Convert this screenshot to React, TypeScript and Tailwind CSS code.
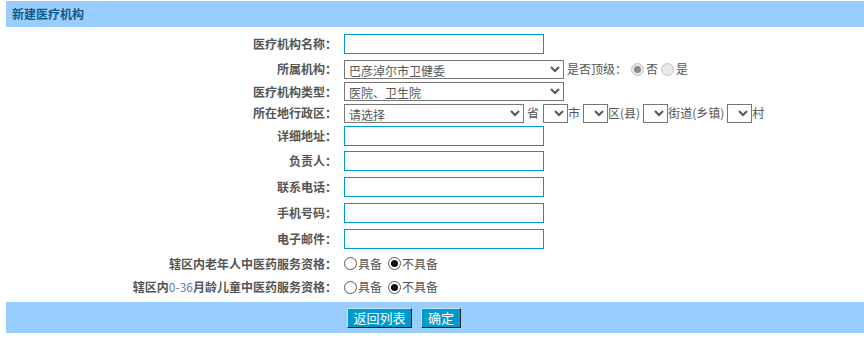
import React from 'react';

const font = { fontFamily: '"Noto Sans CJK SC", "Liberation Sans", sans-serif' };

const Radio: React.FC<{ checked?: boolean; disabled?: boolean }> = ({ checked, disabled }) => (
  <span
    className={
      disabled
        ? 'inline-flex items-center justify-center w-[13px] h-[13px] rounded-full border border-[#c4c4c4] bg-[#e8e8e8]'
        : 'inline-flex items-center justify-center w-[13px] h-[13px] rounded-full border border-[#555] bg-white'
    }
  >
    {checked && (
      <span className={disabled ? 'w-[7px] h-[7px] rounded-full bg-[#8a8a8a]' : 'w-[7px] h-[7px] rounded-full bg-[#111]'} />
    )}
  </span>
);

const TextInput: React.FC = () => (
  <input type="text" className="w-[200px] h-[20px] border border-[#0099cc] bg-white px-1 text-[12px] outline-none" />
);

const Row: React.FC<{ label: React.ReactNode; h: string; children: React.ReactNode }> = ({ label, h, children }) => (
  <div className={`flex items-center ${h}`}>
    <div className="w-[337px] text-right font-bold text-[12px] text-[#555] leading-none">{label}</div>
    <div className="ml-[7px] flex items-center text-[12px] text-[#555]">{children}</div>
  </div>
);

const App: React.FC = () => {
  return (
    <div className="w-[864px] h-[345px] bg-white" style={font}>
      <div className="ml-[6px] mt-[1px] h-[26px] bg-[#99ccff] flex items-center pl-[6px]">
        <span className="text-[12px] font-bold text-[#0b5c8c]">新建医疗机构</span>
      </div>

      <div className="mt-[4px]">
        <Row label="医疗机构名称：" h="h-[26px]">
          <TextInput />
        </Row>
        <Row label="所属机构：" h="h-[24px]">
          <select className="w-[220px] h-[19px] border border-[#767676] text-[12px] text-[#555]">
            <option>巴彦淖尔市卫健委</option>
          </select>
          <span className="ml-[3px]">是否顶级：</span>
          <span className="ml-[4px] flex items-center gap-[2px]">
            <Radio checked disabled />
            <span>否</span>
          </span>
          <span className="ml-[3px] flex items-center gap-[2px]">
            <Radio disabled />
            <span>是</span>
          </span>
        </Row>
        <Row label="医疗机构类型：" h="h-[21px]">
          <select className="w-[220px] h-[19px] border border-[#767676] text-[12px] text-[#555]">
            <option>医院、卫生院</option>
          </select>
        </Row>
        <Row label="所在地行政区：" h="h-[22px]">
          <select className="w-[180px] h-[19px] border border-[#767676] text-[12px] text-[#555]">
            <option>请选择</option>
          </select>
          <span className="ml-[3px]">省</span>
          <select className="ml-[4px] w-[25px] h-[19px] border border-[#767676] text-[12px]" />
          <span>市</span>
          <select className="ml-[3px] w-[25px] h-[19px] border border-[#767676] text-[12px]" />
          <span>区(县)</span>
          <select className="ml-[3px] w-[25px] h-[19px] border border-[#767676] text-[12px]" />
          <span>街道(乡镇)</span>
          <select className="ml-[3px] w-[25px] h-[19px] border border-[#767676] text-[12px]" />
          <span>村</span>
        </Row>
        <Row label="详细地址：" h="h-[24px]">
          <TextInput />
        </Row>
        <Row label="负责人：" h="h-[26px]">
          <TextInput />
        </Row>
        <Row label="联系电话：" h="h-[26px]">
          <TextInput />
        </Row>
        <Row label="手机号码：" h="h-[26px]">
          <TextInput />
        </Row>
        <Row label="电子邮件：" h="h-[25px]">
          <TextInput />
        </Row>
        <Row label="辖区内老年人中医药服务资格：" h="h-[25px]">
          <span className="flex items-center gap-[1px]">
            <Radio />
            <span>具备</span>
          </span>
          <span className="ml-[6px] flex items-center gap-[1px]">
            <Radio checked />
            <span>不具备</span>
          </span>
        </Row>
        <Row
          label={
            <>
              辖区内<span className="font-normal text-[#5b7fb0]">0-36</span>月龄儿童中医药服务资格：
            </>
          }
          h="h-[22px]"
        >
          <span className="flex items-center gap-[1px]">
            <Radio />
            <span>具备</span>
          </span>
          <span className="ml-[6px] flex items-center gap-[1px]">
            <Radio checked />
            <span>不具备</span>
          </span>
        </Row>
      </div>

      <div className="ml-[6px] mt-[4px] h-[31px] bg-[#99ccff] flex items-center pl-[341px] gap-[9px]">
        <button className="w-[65px] h-[20px] bg-[#0099cc] text-white text-[13px] leading-none border border-t-[#bfe6ff] border-l-[#bfe6ff] border-b-[#1a1a1a] border-r-[#1a1a1a]">
          返回列表
        </button>
        <button className="w-[40px] h-[20px] bg-[#0099cc] text-white text-[13px] leading-none border border-t-[#bfe6ff] border-l-[#bfe6ff] border-b-[#1a1a1a] border-r-[#1a1a1a]">
          确定
        </button>
      </div>
    </div>
  );
};

export default App;
